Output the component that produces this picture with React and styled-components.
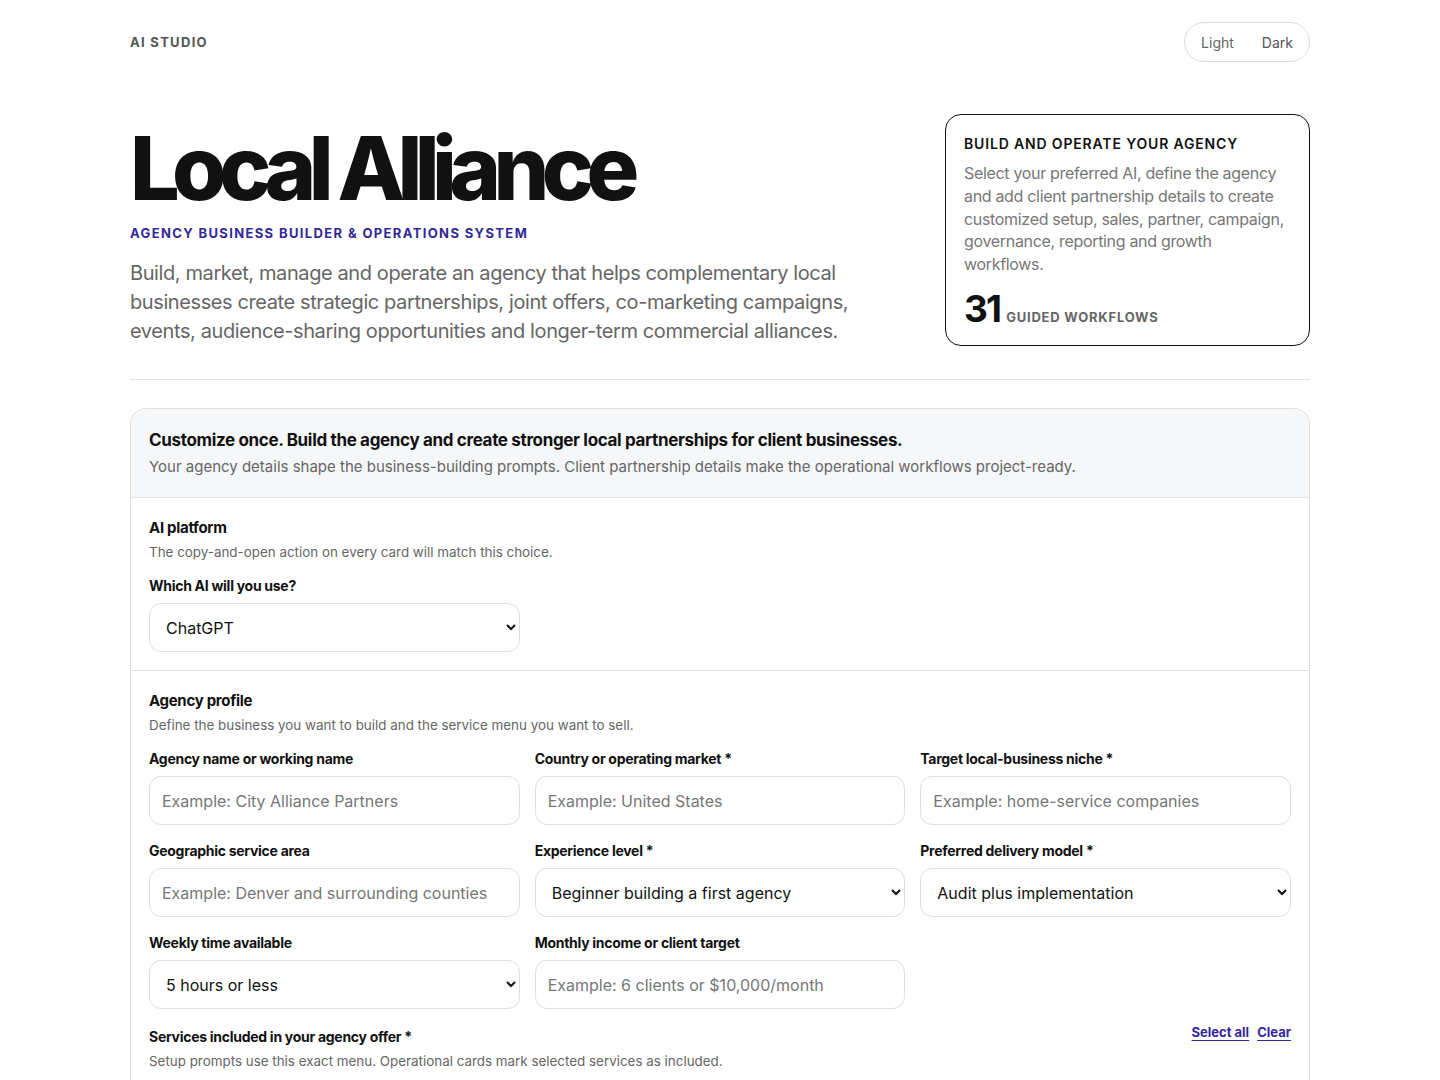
import React, { useState } from "react";
import styled, { createGlobalStyle } from "styled-components";

const GlobalStyle = createGlobalStyle`
  * { box-sizing: border-box; }
  body {
    margin: 0;
    background: #ffffff;
    font-family: Inter, "Noto Sans", sans-serif;
    color: #111;
  }
`;

const Page = styled.div`
  width: 1180px;
  margin: 0 auto;
  padding-top: 22px;
`;

const TopBar = styled.header`
  display: flex;
  justify-content: space-between;
  align-items: center;
  height: 40px;
`;

const Brand = styled.div`
  font-size: 13px;
  font-weight: 700;
  letter-spacing: 0.1em;
  color: #555;
`;

const Toggle = styled.div`
  display: flex;
  align-items: center;
  height: 40px;
  padding: 0 16px;
  gap: 28px;
  border: 1px solid #dcdcdc;
  border-radius: 20px;
`;

const ToggleOption = styled.button`
  border: none;
  background: none;
  padding: 0;
  font-family: inherit;
  font-size: 14px;
  color: ${(p) => (p.active ? "#666" : "#555")};
  cursor: pointer;
`;

const Hero = styled.section`
  display: flex;
  justify-content: space-between;
  align-items: flex-start;
  padding-top: 52px;
  padding-bottom: 33px;
  border-bottom: 1px solid #e4e4e4;
`;

const HeroText = styled.div`
  width: 740px;
`;

const Title = styled.h1`
  margin: 0;
  font-size: 88px;
  line-height: 108px;
  font-weight: 800;
  letter-spacing: -0.087em;
  color: #111;
`;

const Kicker = styled.div`
  margin-top: 3px;
  font-size: 13px;
  font-weight: 700;
  letter-spacing: 0.105em;
  color: #33289a;
`;

const Lead = styled.p`
  margin: 18px 0 0;
  font-size: 20px;
  line-height: 29px;
  letter-spacing: -0.02em;
  color: #666;
`;

const InfoCard = styled.aside`
  width: 365px;
  border: 1px solid #111;
  border-radius: 16px;
  padding: 20px 18px 14px;
`;

const InfoTitle = styled.h3`
  margin: 0;
  font-size: 14px;
  font-weight: 600;
  letter-spacing: 0.06em;
  color: #111;
`;

const InfoBody = styled.p`
  margin: 10px 0 0;
  font-size: 16px;
  line-height: 22.75px;
  letter-spacing: -0.02em;
  color: #777;
`;

const Stat = styled.div`
  display: flex;
  align-items: baseline;
  gap: 6px;
  margin-top: 10px;
`;

const StatNumber = styled.span`
  font-size: 37px;
  font-weight: 700;
  letter-spacing: -0.05em;
  color: #111;
`;

const StatLabel = styled.span`
  font-size: 13px;
  font-weight: 700;
  letter-spacing: 0.06em;
  color: #666;
`;

const Panel = styled.div`
  margin-top: 28px;
  border: 1px solid #dedede;
  border-bottom: none;
  border-radius: 16px 16px 0 0;
  overflow: hidden;
`;

const PanelHead = styled.div`
  background: #f6f7f9;
  padding: 21px 18px 21px;
  border-bottom: 1px solid #e2e2e2;
`;

const PanelTitle = styled.h2`
  margin: 0;
  font-size: 17px;
  font-weight: 700;
  letter-spacing: -0.02em;
  color: #111;
`;

const PanelSub = styled.p`
  margin: 7px 0 0;
  font-size: 15px;
  color: #666;
`;

const Section = styled.section`
  padding: 20px 18px 18px;
  border-top: ${(p) => (p.divided ? "1px solid #e2e2e2" : "none")};
`;

const SectionTitle = styled.h3`
  margin: 0;
  font-size: 15px;
  font-weight: 700;
  letter-spacing: -0.02em;
  color: #111;
`;

const SectionSub = styled.p`
  margin: 7px 0 0;
  font-size: 13.4px;
  color: #666;
`;

const Grid = styled.div`
  display: grid;
  grid-template-columns: repeat(3, 1fr);
  column-gap: 15px;
  row-gap: 17px;
  margin-top: 17px;
`;

const Field = styled.label`
  display: flex;
  flex-direction: column;
  gap: 9px;
`;

const Label = styled.span`
  font-size: 14px;
  font-weight: 700;
  letter-spacing: -0.02em;
  color: #111;
`;

const Input = styled.input`
  height: 49px;
  padding: 0 12px;
  border: 1px solid #dedede;
  border-radius: 12px;
  font-family: inherit;
  font-size: 16px;
  color: #111;
  background: #fff;
  outline: none;

  &::placeholder {
    color: #777;
  }
`;

const Select = styled.select`
  height: 49px;
  padding: 0 10px 0 12px;
  border: 1px solid #dedede;
  border-radius: 12px;
  font-family: inherit;
  font-size: 16px;
  color: #111;
  background: #fff;
  outline: none;
`;

const ServicesHead = styled.div`
  display: flex;
  justify-content: space-between;
  align-items: flex-start;
  margin-top: 17px;
`;

const Links = styled.div`
  display: flex;
  gap: 8px;
  margin-top: -2px;
`;

const TextLink = styled.button`
  border: none;
  background: none;
  padding: 0;
  font-family: inherit;
  font-size: 13px;
  font-weight: 700;
  color: #33289a;
  text-decoration: underline;
  text-underline-offset: 3px;
  cursor: pointer;
`;

const App = () => {
  const [theme, setTheme] = useState("light");

  return (
    <>
      <GlobalStyle />
      <Page>
        <TopBar>
          <Brand>AI STUDIO</Brand>
          <Toggle>
            <ToggleOption active={theme === "light"} onClick={() => setTheme("light")}>Light</ToggleOption>
            <ToggleOption active={theme === "dark"} onClick={() => setTheme("dark")}>Dark</ToggleOption>
          </Toggle>
        </TopBar>

        <Hero>
          <HeroText>
            <Title>Local Alliance</Title>
            <Kicker>AGENCY BUSINESS BUILDER &amp; OPERATIONS SYSTEM</Kicker>
            <Lead>
              Build, market, manage and operate an agency that helps complementary local businesses create strategic
              partnerships, joint offers, co-marketing campaigns, events, audience-sharing opportunities and
              longer-term commercial alliances.
            </Lead>
          </HeroText>
          <InfoCard>
            <InfoTitle>BUILD AND OPERATE YOUR AGENCY</InfoTitle>
            <InfoBody>
              Select your preferred AI, define the agency and add client partnership details to create customized
              setup, sales, partner, campaign, governance, reporting and growth workflows.
            </InfoBody>
            <Stat>
              <StatNumber>31</StatNumber>
              <StatLabel>GUIDED WORKFLOWS</StatLabel>
            </Stat>
          </InfoCard>
        </Hero>

        <Panel>
          <PanelHead>
            <PanelTitle>Customize once. Build the agency and create stronger local partnerships for client businesses.</PanelTitle>
            <PanelSub>
              Your agency details shape the business-building prompts. Client partnership details make the operational
              workflows project-ready.
            </PanelSub>
          </PanelHead>

          <Section>
            <SectionTitle>AI platform</SectionTitle>
            <SectionSub>The copy-and-open action on every card will match this choice.</SectionSub>
            <Grid>
              <Field>
                <Label>Which AI will you use?</Label>
                <Select defaultValue="ChatGPT">
                  <option>ChatGPT</option>
                  <option>Claude</option>
                  <option>Gemini</option>
                </Select>
              </Field>
            </Grid>
          </Section>

          <Section divided>
            <SectionTitle>Agency profile</SectionTitle>
            <SectionSub>Define the business you want to build and the service menu you want to sell.</SectionSub>
            <Grid>
              <Field>
                <Label>Agency name or working name</Label>
                <Input placeholder="Example: City Alliance Partners" />
              </Field>
              <Field>
                <Label>Country or operating market *</Label>
                <Input placeholder="Example: United States" />
              </Field>
              <Field>
                <Label>Target local-business niche *</Label>
                <Input placeholder="Example: home-service companies" />
              </Field>
              <Field>
                <Label>Geographic service area</Label>
                <Input placeholder="Example: Denver and surrounding counties" />
              </Field>
              <Field>
                <Label>Experience level *</Label>
                <Select defaultValue="Beginner building a first agency">
                  <option>Beginner building a first agency</option>
                  <option>Experienced freelancer</option>
                  <option>Established agency</option>
                </Select>
              </Field>
              <Field>
                <Label>Preferred delivery model *</Label>
                <Select defaultValue="Audit plus implementation">
                  <option>Audit plus implementation</option>
                  <option>Done-for-you retainer</option>
                  <option>Advisory only</option>
                </Select>
              </Field>
              <Field>
                <Label>Weekly time available</Label>
                <Select defaultValue="5 hours or less">
                  <option>5 hours or less</option>
                  <option>5 to 15 hours</option>
                  <option>15+ hours</option>
                </Select>
              </Field>
              <Field>
                <Label>Monthly income or client target</Label>
                <Input placeholder="Example: 6 clients or $10,000/month" />
              </Field>
            </Grid>
            <ServicesHead>
              <div>
                <Label>Services included in your agency offer *</Label>
                <SectionSub>Setup prompts use this exact menu. Operational cards mark selected services as included.</SectionSub>
              </div>
              <Links>
                <TextLink>Select all</TextLink>
                <TextLink>Clear</TextLink>
              </Links>
            </ServicesHead>
          </Section>
        </Panel>
      </Page>
    </>
  );
};

export default App;
